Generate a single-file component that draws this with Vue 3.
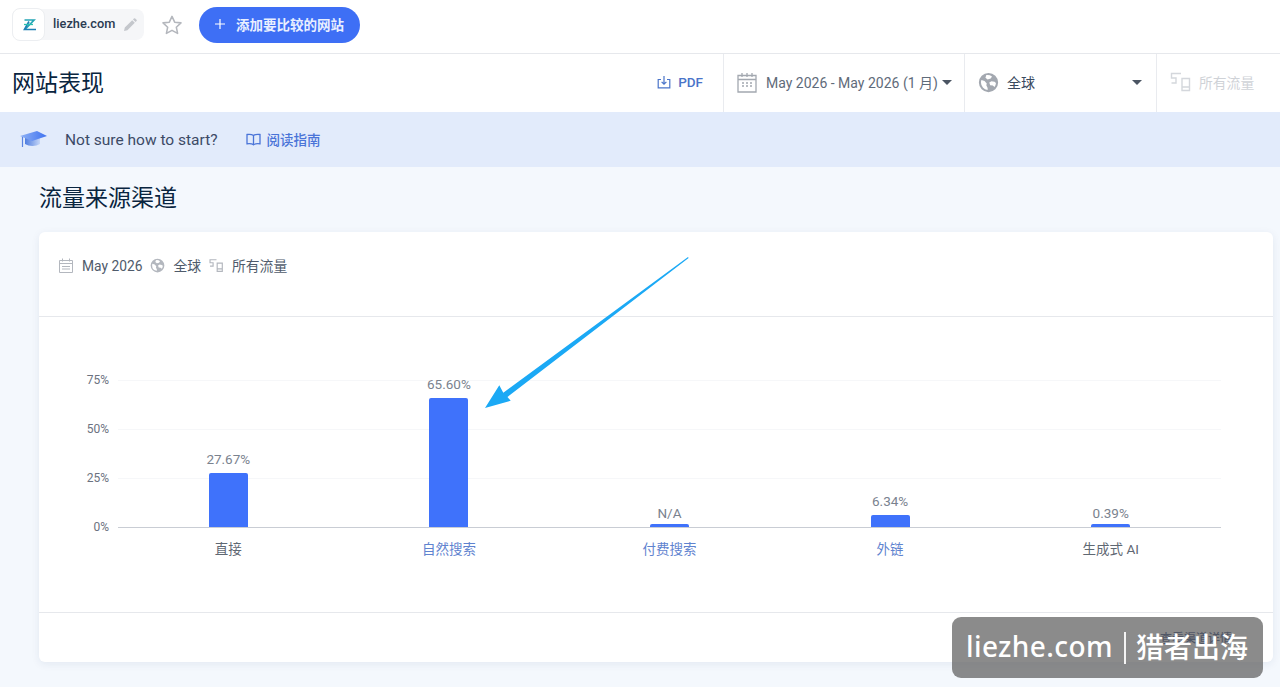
<script setup>
// Данные графика
const PX_PER_PERCENT = 1.96
const channels = [
  { name: '直接', label: '27.67%', value: 27.67, link: false },
  { name: '自然搜索', label: '65.60%', value: 65.6, link: true },
  { name: '付费搜索', label: 'N/A', value: 0, link: true },
  { name: '外链', label: '6.34%', value: 6.34, link: true },
  { name: '生成式 AI', label: '0.39%', value: 0.39, link: false }
]
const ticks = ['75%', '50%', '25%', '0%']

const barHeight = (value) => Math.max(value * PX_PER_PERCENT, 3) + 'px'
</script>

<template>
  <div class="page">
    <header class="top-bar">
      <div class="site-chip">
        <span class="site-logo">
          <svg width="16" height="16" viewBox="0 0 16 16" fill="none">
            <path d="M3.500 3h9.500L4 12.500" stroke="#25a5b5" stroke-width="1.700"/>
            <path d="M8 4.500 3.500 12.500h11.500" stroke="#1f7fb5" stroke-width="1.700"/>
            <path d="M3 7.500h9" stroke="#2bc0b0" stroke-width="1.300"/>
          </svg>
        </span>
        <span class="site-name">liezhe.com</span>
        <svg class="site-edit" width="14" height="14" viewBox="0 0 14 14" fill="#c4c7cc">
          <path d="M1 13l.8-3.400 7.400-7.400 2.600 2.600-7.400 7.400zM10 1.400l.9-.9a.9.9 0 0 1 1.300 0l1.300 1.300a.9.9 0 0 1 0 1.300l-.9.9z"/>
        </svg>
      </div>
      <svg class="star" width="22" height="22" viewBox="0 0 24 24" fill="none" stroke="#b4b7bd" stroke-width="1.700" stroke-linejoin="round">
        <path d="M12 2.600l2.900 6.300 6.900.8-5.100 4.700 1.400 6.800-6.100-3.400-6.100 3.400 1.400-6.800-5.100-4.700 6.900-.8z"/>
      </svg>
      <button class="add-btn">
        <svg width="10" height="10" viewBox="0 0 10 10" stroke="#fff" stroke-width="1.200">
          <path d="M5 0v10M0 5h10"/>
        </svg>
        <span>添加要比较的网站</span>
      </button>
    </header>

    <section class="title-row">
      <h1 class="page-title">网站表现</h1>
      <a class="pdf-link">
        <svg width="14" height="14" viewBox="0 0 14 14" fill="none" stroke="#4a74c9" stroke-width="1.200">
          <path d="M4 4.500H1.200v8.300h11.600V4.500H10M7 1v8M4.600 6.800 7 9.200l2.400-2.400"/>
        </svg>
        <span>PDF</span>
      </a>
      <div class="filter filter-date">
        <svg width="20" height="21" viewBox="0 0 20 21" fill="none" stroke="#a3a8b0" stroke-width="1.300">
          <path d="M1 3.500h18v16.500H1zM1 7.500h18M5 1v4M10 1v4M15 1v4"/>
          <path d="M5 11h2M9 11h2M13 11h2M5 14h2M9 14h2M13 14h2" stroke-width="1.400"/>
        </svg>
        <span class="filter-text">May 2026 - May 2026 (1 月)</span>
        <i class="caret"></i>
      </div>
      <div class="filter filter-region">
        <svg width="21" height="21" viewBox="0 0 24 24" fill="#a3a8b0">
          <path d="M12 1a11 11 0 1 0 0 22 11 11 0 0 0 0-22zM3.400 12c0-1 .2-1.900.5-2.800l3.600 1 2.500 3-.5 2 1.500 3v2.300A8.600 8.600 0 0 1 3.400 12zm15.500 5.200-2-1.700-3-.5-1-3 2.500-1.500 3.500.5 1.600 1.500a8.600 8.600 0 0 1-1.600 4.700zM16 5l-1.500 2.500-3.500 1-2.500-2 1-3a8.700 8.700 0 0 1 6.500 1.500z"/>
        </svg>
        <span class="filter-text region-text">全球</span>
        <i class="caret"></i>
      </div>
      <div class="filter filter-traffic">
        <svg width="22" height="20" viewBox="0 0 22 20" fill="none" stroke="#d4d7dc" stroke-width="1.400">
          <path d="M11 1.500H1.500v4.500H6v5H1.500M12 6.500h7.500v12H12zM12 15h7.500"/>
        </svg>
        <span class="filter-text traffic-text">所有流量</span>
      </div>
    </section>

    <section class="guide-banner">
      <svg width="27" height="20" viewBox="0 0 27 20">
        <defs>
          <linearGradient id="cap-top" x1="0" y1="0" x2="1" y2="0">
            <stop offset="0" stop-color="#8fb2f5"/>
            <stop offset="1" stop-color="#3f72f0"/>
          </linearGradient>
          <linearGradient id="cap-body" x1="0" y1="0" x2="1" y2="0">
            <stop offset="0" stop-color="#4f7de0"/>
            <stop offset="1" stop-color="#c5d6f7"/>
          </linearGradient>
        </defs>
        <path d="M5 8h15v6c-4 2.500-11 2.500-15 0z" fill="url(#cap-body)"/>
        <path d="M0 6 17 1l10 5-15 5z" fill="url(#cap-top)"/>
        <path d="M2.500 7v10" stroke="#5b83e0" stroke-width="1.200"/>
      </svg>
      <span class="guide-question">Not sure how to start?</span>
      <a class="guide-link">
        <svg width="15" height="13" viewBox="0 0 15 13" fill="none" stroke="#4a74d8" stroke-width="1.300">
          <path d="M7.500 2.500C6 1.300 3.500 1.200 1 1.500v9.300c2.500-.3 5-.2 6.500 1 1.500-1.200 4-1.300 6.500-1V1.500c-2.500-.3-5-.2-6.500 1zM7.500 2.500v9.300"/>
        </svg>
        <span>阅读指南</span>
      </a>
    </section>

    <main class="content">
      <h2 class="section-title">流量来源渠道</h2>
      <div class="card">
        <div class="card-head">
          <svg class="meta-calendar" width="14" height="15" viewBox="0 0 14 15" fill="none" stroke="#b3b7be" stroke-width="1">
            <path d="M.5 2.500h13v12H.5zM.5 5.500h13M3.500.5v3M10.500.5v3M3 8.500h8M3 11h8"/>
          </svg>
          <span class="meta-text">May 2026</span>
          <svg width="15" height="15" viewBox="0 0 24 24" fill="#b3b7be">
            <path d="M12 1a11 11 0 1 0 0 22 11 11 0 0 0 0-22zM3.400 12c0-1 .2-1.900.5-2.800l3.600 1 2.500 3-.5 2 1.500 3v2.300A8.600 8.600 0 0 1 3.400 12zm15.500 5.200-2-1.700-3-.5-1-3 2.500-1.500 3.500.5 1.600 1.500a8.600 8.600 0 0 1-1.600 4.700zM16 5l-1.500 2.500-3.500 1-2.500-2 1-3a8.700 8.700 0 0 1 6.500 1.500z"/>
          </svg>
          <span class="meta-text">全球</span>
          <svg width="15" height="15" viewBox="0 0 22 20" fill="none" stroke="#b3b7be" stroke-width="1.700">
            <path d="M11 1.500H1.500v4.500H6v5H1.500M12 6.500h7.500v12H12zM12 15h7.500"/>
          </svg>
          <span class="meta-text">所有流量</span>
        </div>

        <div class="chart">
          <div class="y-axis">
            <span v-for="tick in ticks" :key="tick" class="y-tick">{{ tick }}</span>
          </div>
          <div class="chart-main">
            <div class="plot">
              <div class="grid-lines">
                <i></i><i></i><i></i>
              </div>
              <div v-for="item in channels" :key="item.name" class="bar-col">
                <span class="bar-label" :class="{ 'bar-label-low': item.value < 1 }">{{ item.label }}</span>
                <div class="bar" :style="{ height: barHeight(item.value) }"></div>
              </div>
            </div>
            <div class="x-axis">
              <span
                v-for="item in channels"
                :key="item.name"
                class="x-label"
                :class="{ 'x-link': item.link }"
              >{{ item.name }}</span>
            </div>
          </div>
        </div>

        <div class="card-foot">
          <a class="foot-link">查看渠道详情</a>
        </div>
      </div>
    </main>

    <!-- Стрелка поверх скриншота -->
    <svg class="arrow" width="1280" height="687" viewBox="0 0 1280 687">
      <path d="M688 257 503.300 392.700 499.300 385.300 485 408 510.700 400.700 507.500 397 688.600 258z" fill="#1ba9f5"/>
    </svg>

    <div class="watermark">
      <span class="wm-domain">liezhe.com</span><span class="wm-sep"></span><span>猎者出海</span>
    </div>
  </div>
</template>

<style scoped>
.page {
  position: relative;
  height: 687px;
  overflow: hidden;
  display: flex;
  flex-direction: column;
  background: #f4f8fd;
  font-family: Roboto, "Noto Sans CJK SC", sans-serif;
  color: #092540;
}

.top-bar {
  height: 54px;
  flex-shrink: 0;
  display: flex;
  align-items: center;
  padding: 0 0 4px 12px;
  box-sizing: border-box;
  background: #fff;
  border-bottom: 1px solid #e6e8ec;
}

.site-chip {
  width: 132px;
  height: 31px;
  display: flex;
  align-items: center;
  background: #f5f6f8;
  border-radius: 8px;
}

.site-logo {
  width: 33px;
  height: 33px;
  flex-shrink: 0;
  display: flex;
  align-items: center;
  justify-content: center;
  background: #fff;
  border: 1px solid #eceef1;
  border-radius: 8px;
  box-sizing: border-box;
}

.site-name {
  margin: 0 0 2px 8px;
  font-size: 12.800px;
  font-weight: 500;
  color: #2a3b52;
}

.site-edit {
  margin-left: 8px;
}

.star {
  margin-left: 17px;
}

.add-btn {
  margin-left: 16px;
  width: 161px;
  height: 36px;
  display: flex;
  align-items: center;
  justify-content: center;
  gap: 11px;
  padding: 0 0 2px;
  border: none;
  border-radius: 18px;
  background: #3e6ff5;
  color: #e9efff;
  font-family: inherit;
  font-size: 13.500px;
  font-weight: 700;
}

.title-row {
  height: 58px;
  flex-shrink: 0;
  display: flex;
  align-items: stretch;
  background: #fff;
}

.page-title {
  margin: 0 auto 0 12px;
  align-self: center;
  font-size: 23px;
  font-weight: 400;
  line-height: 1;
  color: #092540;
}

.pdf-link {
  display: flex;
  align-items: center;
  gap: 7px;
  margin-right: 20px;
  padding-bottom: 2px;
  font-size: 13.500px;
  font-weight: 500;
  color: #4a74c9;
}

.filter {
  display: flex;
  align-items: center;
  box-sizing: border-box;
  padding: 0 0 2px 13px;
  border-left: 1px solid #e9ebef;
}

.filter-date {
  width: 241px;
}

.filter-region {
  width: 192px;
}

.filter-traffic {
  width: 124px;
}

.filter-text {
  margin-left: 9px;
  font-size: 14px;
  color: #5f6b7a;
}

.region-text {
  flex: 1;
  margin-left: 8px;
  color: #3a4a5e;
}

.traffic-text {
  margin-left: 7px;
  font-size: 13.800px;
  color: #cfd2d7;
}

.caret {
  width: 0;
  height: 0;
  margin-left: 4px;
  border-left: 5px solid transparent;
  border-right: 5px solid transparent;
  border-top: 5px solid #4b5563;
}

.filter-region .caret {
  margin-right: 14px;
}

.guide-banner {
  height: 55px;
  flex-shrink: 0;
  display: flex;
  align-items: center;
  padding-left: 20px;
  box-sizing: border-box;
  background: #e2ebfb;
}

.guide-question {
  margin: 1px 0 0 18px;
  font-size: 15.500px;
  font-weight: 400;
  color: #3c4a66;
}

.guide-link {
  display: flex;
  align-items: center;
  gap: 6px;
  margin-left: 28px;
  padding-bottom: 1px;
  font-size: 13.500px;
  font-weight: 500;
  color: #4a74d8;
}

.content {
  flex: 1;
  padding: 0 7px 0 39px;
}

.section-title {
  margin: 0;
  height: 65px;
  line-height: 63px;
  font-size: 23px;
  font-weight: 400;
  color: #092540;
}

.card {
  height: 430px;
  display: flex;
  flex-direction: column;
  background: #fff;
  border-radius: 6px;
  box-shadow: 0 2px 8px rgba(20, 50, 100, 0.08);
}

.card-head {
  height: 85px;
  flex-shrink: 0;
  display: flex;
  align-items: flex-start;
  gap: 8px;
  padding: 26px 0 0 20px;
  box-sizing: border-box;
  border-bottom: 1px solid #e6e8ec;
}

.meta-calendar {
  margin-right: 1px;
}

.meta-text {
  font-size: 13.800px;
  line-height: 16px;
  color: #4f5b6b;
}

.chart {
  height: 296px;
  flex-shrink: 0;
  display: flex;
  padding-top: 63px;
  box-sizing: border-box;
  border-bottom: 1px solid #e6e8ec;
}

.y-axis {
  width: 70px;
  height: 147px;
  flex-shrink: 0;
  display: flex;
  flex-direction: column;
  justify-content: space-between;
  align-items: flex-end;
}

.y-tick {
  height: 0;
  line-height: 0;
  font-size: 12px;
  color: #6b7280;
}

.chart-main {
  width: 1103px;
  margin-left: 9px;
}

.plot {
  position: relative;
  height: 147px;
  display: grid;
  grid-template-columns: repeat(5, 1fr);
  grid-template-rows: 147px;
  box-shadow: 0 1px 0 #c9cdd4;
}

.grid-lines {
  position: absolute;
  inset: 0;
}

.grid-lines i {
  display: block;
  height: 1px;
  margin-bottom: 48px;
  background: #f6f7f9;
}

.bar-col {
  position: relative;
  display: flex;
  flex-direction: column;
  align-items: center;
  justify-content: flex-end;
  min-height: 0;
}

.bar-label {
  margin-bottom: 6px;
  font-size: 13.500px;
  line-height: 15px;
  color: #7a828e;
}

.bar-label-low {
  margin-bottom: 3px;
}

.bar {
  width: 39px;
  flex-shrink: 0;
  background: #3f72fb;
  border-radius: 2px 2px 0 0;
}

.x-axis {
  display: grid;
  grid-template-columns: repeat(5, 1fr);
  margin-top: 14px;
  text-align: center;
}

.x-label {
  font-size: 13.500px;
  line-height: 16px;
  color: #5f6873;
}

.x-link {
  color: #5f83cf;
}

.card-foot {
  flex: 1;
  display: flex;
  align-items: center;
  justify-content: flex-end;
  padding-right: 41px;
}

.foot-link {
  font-size: 12px;
  font-weight: 500;
  color: #14306e;
}

.arrow {
  position: absolute;
  left: 0;
  top: 0;
  pointer-events: none;
}

.watermark {
  position: absolute;
  left: 952px;
  top: 617px;
  width: 311px;
  height: 61px;
  display: flex;
  align-items: center;
  box-sizing: border-box;
  padding: 0 0 4px 14px;
  border-radius: 9px;
  background: rgba(100, 100, 100, 0.75);
  color: #fff;
  font-family: "Noto Sans", "Noto Sans CJK SC", sans-serif;
  font-size: 28px;
  font-weight: 500;
  white-space: nowrap;
}

.wm-domain {
  letter-spacing: 0.4px;
}

.wm-sep {
  width: 2px;
  height: 32px;
  margin: 4px 10px 0 11px;
  background: #f4f4f4;
}
</style>

<style>
html,
body {
  margin: 0;
  background: #f4f8fd;
}
</style>
